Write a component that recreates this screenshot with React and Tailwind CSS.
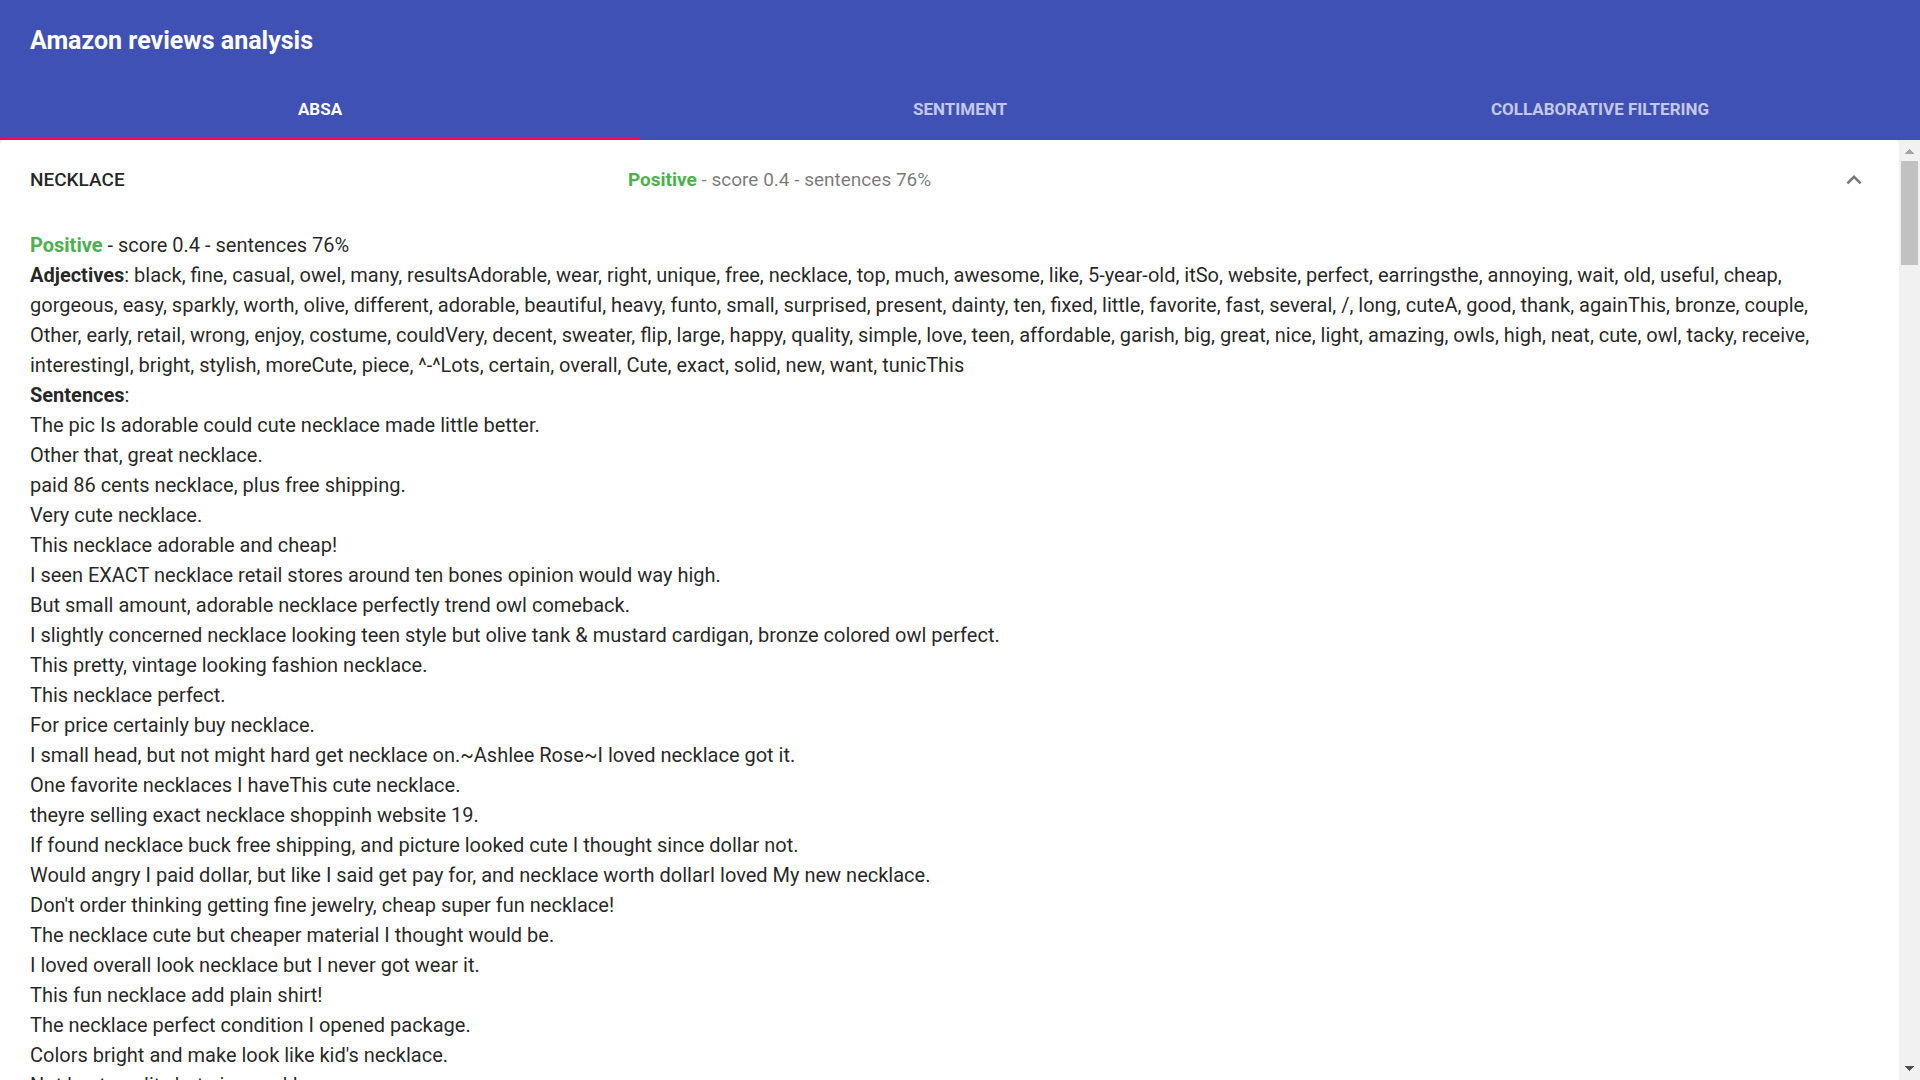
import { useRef, useState } from "react";

const tabs = ["ABSA", "Sentiment", "Collaborative filtering"];

const adjectives =
  "black, fine, casual, owel, many, resultsAdorable, wear, right, unique, free, necklace, top, much, awesome, like, 5-year-old, itSo, website, perfect, earringsthe, annoying, wait, old, useful, cheap, gorgeous, easy, sparkly, worth, olive, different, adorable, beautiful, heavy, funto, small, surprised, present, dainty, ten, fixed, little, favorite, fast, several, /, long, cuteA, good, thank, againThis, bronze, couple, Other, early, retail, wrong, enjoy, costume, couldVery, decent, sweater, flip, large, happy, quality, simple, love, teen, affordable, garish, big, great, nice, light, amazing, owls, high, neat, cute, owl, tacky, receive, interestingI, bright, stylish, moreCute, piece, ^-^Lots, certain, overall, Cute, exact, solid, new, want, tunicThis";

const sentences = [
  "The pic Is adorable could cute necklace made little better.",
  "Other that, great necklace.",
  "paid 86 cents necklace, plus free shipping.",
  "Very cute necklace.",
  "This necklace adorable and cheap!",
  "I seen EXACT necklace retail stores around ten bones opinion would way high.",
  "But small amount, adorable necklace perfectly trend owl comeback.",
  "I slightly concerned necklace looking teen style but olive tank & mustard cardigan, bronze colored owl perfect.",
  "This pretty, vintage looking fashion necklace.",
  "This necklace perfect.",
  "For price certainly buy necklace.",
  "I small head, but not might hard get necklace on.~Ashlee Rose~I loved necklace got it.",
  "One favorite necklaces I haveThis cute necklace.",
  "theyre selling exact necklace shoppinh website 19.",
  "If found necklace buck free shipping, and picture looked cute I thought since dollar not.",
  "Would angry I paid dollar, but like I said get pay for, and necklace worth dollarI loved My new necklace.",
  "Don't order thinking getting fine jewelry, cheap super fun necklace!",
  "The necklace cute but cheaper material I thought would be.",
  "I loved overall look necklace but I never got wear it.",
  "This fun necklace add plain shirt!",
  "The necklace perfect condition I opened package.",
  "Colors bright and make look like kid's necklace.",
  "Not best quality but nice necklace.",
];

function Header({ active, onChange }) {
  return (
    <header className="shrink-0 bg-[#3f51b5] text-white">
      <div className="flex h-20 items-center px-[30px] pt-0.5">
        <h1 className="text-[25px] leading-10 font-bold">Amazon reviews analysis</h1>
      </div>
      <div role="tablist" className="grid grid-cols-3">
        {tabs.map((tab, i) => (
          <button
            key={tab}
            type="button"
            role="tab"
            aria-selected={i === active}
            onClick={() => onChange(i)}
            className={`h-[60px] border-b-2 pt-0.5 text-[17px] font-bold uppercase ${
              i === active ? "border-[#f50057] text-white" : "border-transparent text-white/70"
            }`}
          >
            {tab}
          </button>
        ))}
      </div>
    </header>
  );
}

function Score() {
  return (
    <>
      <b className="font-bold text-[#4caf50]">Positive</b> - score 0.4 - sentences 76%
    </>
  );
}

function ScrollBar({ onStep }) {
  return (
    <div className="flex w-[21px] shrink-0 flex-col bg-[#f1f1f1]">
      <button
        type="button"
        aria-label="Scroll up"
        onClick={() => onStep(-60)}
        className="flex h-[21px] shrink-0 items-center justify-center pt-0.5"
      >
        <svg width="9" height="5" viewBox="0 0 9 5" shapeRendering="crispEdges" fill="#a3a3a3">
          <path d="M4 0h1v1h1v1h1v1h1v1h1v1H0V4h1V3h1V2h1V1h1z" />
        </svg>
      </button>
      <div className="flex-1 px-0.5">
        <div className="h-[104px] bg-[#c1c1c1]" />
      </div>
      <button
        type="button"
        aria-label="Scroll down"
        onClick={() => onStep(60)}
        className="flex h-[21px] shrink-0 items-center justify-center pb-0.5"
      >
        <svg width="9" height="5" viewBox="0 0 9 5" shapeRendering="crispEdges" fill="#505050">
          <path d="M0 0h9v1H8v1H7v1H6v1H5v1H4V4H3V3H2V2H1V1H0z" />
        </svg>
      </button>
    </div>
  );
}

export default function App() {
  const [active, setActive] = useState(0);
  const [open, setOpen] = useState(true);
  const scroller = useRef(null);

  return (
    <div className="flex h-screen flex-col bg-[#f1f1f1] font-['Roboto',sans-serif] text-black/87">
      <Header active={active} onChange={setActive} />
      <div className="flex min-h-0 flex-1">
        <main ref={scroller} className="min-w-0 flex-1 overflow-y-auto [scrollbar-width:none]">
          <section className="rounded-t-[5px] bg-white">
            <button
              type="button"
              aria-expanded={open}
              onClick={() => setOpen(!open)}
              className="flex h-20 w-full items-center px-[30px] text-left text-[19px] leading-7"
            >
              <span className="flex flex-1 items-center">
                <span className="basis-1/3 font-medium">NECKLACE</span>
                <span className="text-black/54">
                  <Score />
                </span>
              </span>
              <span className="-mr-[15px] flex size-[60px] items-center justify-center">
                <svg
                  width="30"
                  height="30"
                  viewBox="0 0 24 24"
                  fill="currentColor"
                  className={`text-black/54 ${open ? "rotate-180" : ""}`}
                >
                  <path d="M16.59 8.59L12 13.17 7.41 8.59 6 10l6 6 6-6z" />
                </svg>
              </span>
            </button>
            {open && (
              <div className="pt-2.5 pr-10 pb-[30px] pl-[30px] text-xl leading-[30px]">
                <p>
                  <Score />
                </p>
                <p>
                  <b className="font-bold">Adjectives</b>: {adjectives}
                </p>
                <p>
                  <b className="font-bold">Sentences</b>:
                </p>
                {sentences.map((sentence) => (
                  <p key={sentence}>{sentence}</p>
                ))}
              </div>
            )}
          </section>
        </main>
        <ScrollBar onStep={(top) => scroller.current.scrollBy({ top })} />
      </div>
    </div>
  );
}
